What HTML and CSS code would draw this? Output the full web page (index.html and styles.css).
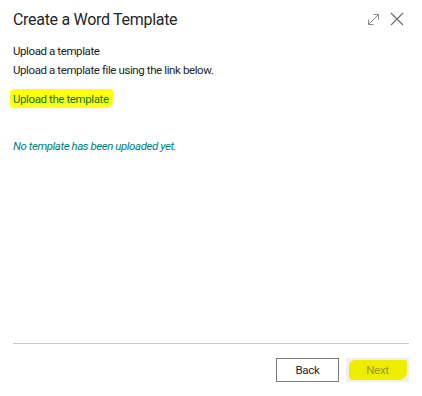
FILE: index.html
```html
<!DOCTYPE html>
<html lang="en">
<head>
    <meta charset="UTF-8">
    <meta name="viewport" content="width=device-width, initial-scale=1.0">
    <title>Create a Word Template</title>
    <link rel="stylesheet" href="styles.css">
</head>
<body>

    <div class="dialog">
        <div class="dialog-header">
            <h1>Create a Word Template</h1>
            <div class="header-actions">
                <button type="button" class="icon-btn" title="Expand">
                    <svg width="13" height="13" viewBox="0 0 13 13">
                        <path d="M1.5 11.5 L11.5 1.5 M6.5 1.5 H11.5 V6.5 M1.5 6.5 V11.5 H6.5" fill="none" stroke="#8a8a8a" stroke-width="1"/>
                    </svg>
                </button>
                <button type="button" class="icon-btn" title="Close">
                    <svg width="14" height="14" viewBox="0 0 14 14">
                        <path d="M1 1 L13 13 M13 1 L1 13" fill="none" stroke="#6e6e6e" stroke-width="1.2"/>
                    </svg>
                </button>
            </div>
        </div>

        <div class="dialog-body">
            <h2>Upload a template</h2>
            <p class="instructions">Upload a template file using the link below.</p>
            <a href="#" class="upload-link">Upload the template</a>
            <p class="status">No template has been uploaded yet.</p>
        </div>

        <div class="dialog-footer">
            <button type="button" class="btn">Back</button>
            <button type="button" class="btn btn-disabled" disabled><span class="marker">Next</span></button>
        </div>
    </div>

</body>
</html>
```

FILE: styles.css
```css
body {
    font-family: Roboto, Arial, sans-serif;
    background-color: #fff;
    color: #262626;
    margin: 0;
}
.dialog {
    height: 396px;
    display: flex;
    flex-direction: column;
    box-sizing: border-box;
    padding: 0 13px;
}
.dialog-header {
    display: flex;
    align-items: center;
    justify-content: space-between;
    height: 38px;
}
h1 {
    font-size: 16px;
    font-weight: 400;
    letter-spacing: -0.3px;
    margin: 0;
    color: #262626;
}
.header-actions {
    display: flex;
    align-items: center;
    gap: 10px;
    margin-right: 5px;
}
.icon-btn {
    background: none;
    border: none;
    padding: 0;
    display: flex;
    cursor: pointer;
}
.dialog-body {
    flex: 1;
    padding-top: 4px;
    font-size: 11.5px;
    letter-spacing: -0.4px;
}
h2 {
    font-size: 11.5px;
    font-weight: 400;
    margin: 0;
    line-height: 18px;
    color: #1a1a1a;
}
.instructions {
    margin: 1px 0 0;
    line-height: 18px;
}
.upload-link {
    display: inline-block;
    margin-top: 10px;
    margin-left: -3px;
    padding: 2px 4px 1px 3px;
    line-height: 16px;
    color: #0b7a0b;
    text-decoration: none;
    background-color: #ffff1a;
    border-radius: 4px 2px 6px 3px;
}
.status {
    font-style: italic;
    letter-spacing: -0.45px;
    color: #00807e;
    margin: 29px 0 0;
    line-height: 18px;
}
.dialog-footer {
    border-top: 1px solid #c8c8c8;
    display: flex;
    justify-content: flex-end;
    gap: 7px;
    padding-top: 14px;
    height: 53px;
    box-sizing: border-box;
}
.btn {
    font-family: inherit;
    font-size: 11.5px;
    letter-spacing: -0.3px;
    width: 63px;
    height: 24px;
    padding: 0;
    border: 1px solid #7a7a7a;
    background-color: #fff;
    color: #262626;
    cursor: pointer;
}
.btn-disabled {
    border-color: #efefef;
    background-color: #efefef;
    color: #9a9a28;
    cursor: default;
    display: flex;
    align-items: center;
    justify-content: center;
}
.marker {
    display: flex;
    align-items: center;
    justify-content: center;
    width: 58px;
    height: 20px;
    background-color: #eded00;
    border-radius: 6px 3px 8px 4px;
}
```
